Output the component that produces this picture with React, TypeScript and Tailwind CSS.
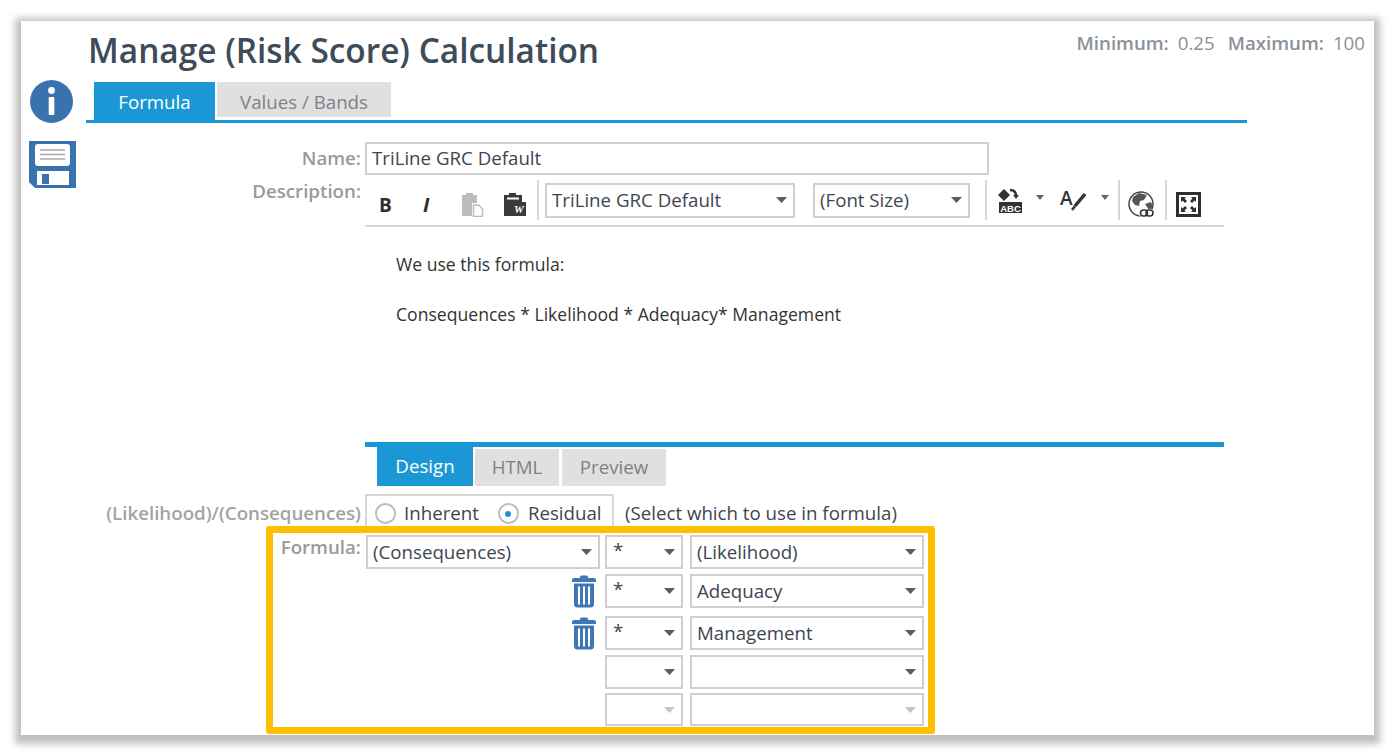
import React from 'react';

const Arrow = ({ muted = false }: { muted?: boolean }) => (
  <svg width="11" height="6" viewBox="0 0 11 6" className="shrink-0">
    <path d="M0 0h11L5.500 6z" fill={muted ? '#c4c4c4' : '#5c5c5c'} />
  </svg>
);

const Select = ({
  value,
  className,
  muted,
  textClass = '',
}: {
  value?: string;
  className: string;
  muted?: boolean;
  textClass?: string;
}) => (
  <div className={`flex shrink-0 items-center justify-between border-2 border-[#cfcfcf] bg-white pl-[5px] pr-[6px] text-[18.7px] text-[#3d4650] ${className}`}>
    <span className={`whitespace-nowrap leading-[24px] ${textClass}`}>{value}</span>
    <Arrow muted={muted} />
  </div>
);

const InfoIcon = () => (
  <svg width="43" height="43" viewBox="0 0 43 43">
    <circle cx="21.5" cy="21.5" r="21.5" fill="#3a72ad" />
    <circle cx="21.5" cy="10.5" r="3.4" fill="#fff" />
    <rect x="18.7" y="17" width="5.6" height="18" rx="1" fill="#fff" />
  </svg>
);

const SaveIcon = () => (
  <svg width="47" height="47" viewBox="0 0 47 47">
    <path d="M0 0h47v47H6l-6-6z" fill="#3a72ad" />
    <rect x="6" y="3" width="35" height="22" rx="3" fill="#fff" />
    <path d="M11 9h25M11 13.500h25M11 18h25" stroke="#a9a9a9" strokeWidth="1.500" />
    <path d="M8 30h32v14H8z" fill="#fff" />
    <rect x="13" y="33" width="7" height="10" fill="#3a72ad" />
  </svg>
);

const TrashIcon = () => (
  <svg width="24" height="33" viewBox="0 0 24 33">
    <path d="M8 3V2a1.500 1.500 0 0 1 1.500-1.500h5A1.500 1.500 0 0 1 16 2v1h6a2 2 0 0 1 2 2v2H0V5a2 2 0 0 1 2-2z" fill="#3f78b5" />
    <path d="M2 8.500h20V29a3.500 3.500 0 0 1-3.500 3.500h-13A3.500 3.500 0 0 1 2 29z" fill="#3f78b5" />
    <path d="M7 11.500v18M12 11.500v18M17 11.500v18" stroke="#fff" strokeWidth="2" />
  </svg>
);

const PasteIcon = () => (
  <svg width="24" height="25" viewBox="0 0 24 25">
    <path d="M1 3h4V1h7v2h4v8h-5v13H1z" fill="#bdbdbd" />
    <path d="M12.500 13h5l4 4v7.500h-9z" fill="#fff" stroke="#bdbdbd" strokeWidth="1.500" />
  </svg>
);

const PasteWordIcon = () => (
  <svg width="24" height="25" viewBox="0 0 24 25">
    <path d="M1 3h5V1h7v2h6v7H9v14H1z" fill="#3a3a3a" />
    <path d="M4 5.500h12v2H4z" fill="#fff" />
    <rect x="9" y="10" width="14" height="14" fill="#3a3a3a" />
    <text x="16" y="21" textAnchor="middle" fontSize="11" fontWeight="700" fontStyle="italic" fill="#fff" fontFamily="Liberation Serif, serif">W</text>
  </svg>
);

const HighlightIcon = () => (
  <svg width="25" height="25" viewBox="0 0 25 25">
    <path d="M1 7l6-6 6 6-6 6z" fill="#333" />
    <path d="M13 2c4 0 6 2 6 6" fill="none" stroke="#333" strokeWidth="2.500" />
    <path d="M16 7h6l-3 4z" fill="#333" />
    <rect x="2" y="14" width="23" height="11" fill="#333" />
    <text x="13.500" y="23.500" textAnchor="middle" fontSize="9.500" fontWeight="700" fill="#fff" fontFamily="Liberation Sans, sans-serif">ABC</text>
  </svg>
);

const TextColorIcon = () => (
  <div className="flex h-[26px] w-[26px] items-start">
    <span className="text-[19px] font-semibold leading-[22px] text-[#333]">A</span>
    <svg width="15" height="24" viewBox="0 0 15 24" className="-ml-[2px]">
      <path d="M14 7L4 19" fill="none" stroke="#333" strokeWidth="3.500" />
      <path d="M4 19l-3 4" fill="none" stroke="#333" strokeWidth="2.500" />
    </svg>
  </div>
);

const GlobeLinkIcon = () => (
  <svg width="27" height="27" viewBox="0 0 27 27">
    <circle cx="13" cy="13" r="12" fill="#fff" stroke="#444" strokeWidth="1.500" />
    <path d="M5 6l6-4 8 2-3 5-4 1-1 5-4-1-3-4zM17 13l6-2 2 5-4 3z" fill="#555" />
    <rect x="11" y="18" width="15" height="8" rx="3.500" fill="#fff" />
    <rect x="12.500" y="19" width="7" height="6" rx="3" fill="none" stroke="#333" strokeWidth="1.600" />
    <rect x="18" y="19" width="7" height="6" rx="3" fill="none" stroke="#333" strokeWidth="1.600" />
  </svg>
);

const FullscreenIcon = () => (
  <svg width="25" height="25" viewBox="0 0 25 25">
    <rect x="1.500" y="1.500" width="22" height="22" fill="#fff" stroke="#2f2f2f" strokeWidth="3" />
    <path d="M5 5h5l-1.500 1.500L11 9l-2 2-2.500-2.500L5 10zM20 5v5l-1.500-1.500L16 11l-2-2 2.500-2.500L15 5zM5 20v-5l1.500 1.500L9 14l2 2-2.500 2.500L10 20zM20 20h-5l1.500-1.500L14 16l2-2 2.500 2.500L20 15z" fill="#2f2f2f" />
  </svg>
);

const SmallArrow = ({ className }: { className: string }) => (
  <svg width="8" height="5" className={`shrink-0 ${className}`} viewBox="0 0 8 5">
    <path d="M0 0h8L4 5z" fill="#666" />
  </svg>
);

const Divider = ({ className }: { className: string }) => <div className={`h-[40px] w-[2px] shrink-0 bg-[#d6d6d6] ${className}`} />;

const Radio = ({ checked }: { checked?: boolean }) => (
  <span className="flex h-[21px] w-[21px] items-center justify-center rounded-full border-2 border-[#bdbdbd] bg-white">
    {checked && <span className="h-[6px] w-[6px] rounded-full bg-[#1b97d5]" />}
  </span>
);

const rows = [
  { op: '*', value: 'Adequacy', h: 'h-[34px]', mb: 'mb-[8px]', trash: true },
  { op: '*', value: 'Management', h: 'h-[34px]', mb: 'mb-[5px]', trash: true },
  { op: '', value: '', h: 'h-[34px]', mb: 'mb-[4px]', trash: false },
  { op: '', value: '', h: 'h-[33px]', mb: '', trash: false, muted: true },
];

const App: React.FC = () => {
  return (
    <div className="h-[755px] w-[1395px] overflow-hidden bg-white pl-[21px] pt-[21px] font-['Open_Sans',sans-serif]">
      <div className="flex h-[714px] w-[1353px] bg-white shadow-[0_3px_7px_6px_#c0c0c0]">
        {/* Side actions */}
        <div className="flex w-[65px] shrink-0 flex-col pl-[8px] pt-[59px]">
          <div className="ml-[1px]"><InfoIcon /></div>
          <div className="mt-[18px]"><SaveIcon /></div>
        </div>

        <div className="flex-1">
          {/* Header */}
          <div className="flex h-[61px] items-start justify-between pr-[9px]">
            <h1 className="pl-[2px] pt-[7px] text-[33.4px] font-semibold leading-[44px] text-[#3e4b58]">Manage (Risk Score) Calculation</h1>
            <div className="flex items-baseline pt-[10px] text-[18.7px] leading-[24px] text-[#8a9199]">
              <span className="font-semibold">Minimum:</span>
              <span className="ml-[9px]">0.25</span>
              <span className="ml-[13px] font-semibold">Maximum:</span>
              <span className="ml-[9px]">100</span>
            </div>
          </div>

          {/* Tabs */}
          <div className="flex h-[41px] w-[1161px] items-start gap-[2px] border-b-[3px] border-[#1b97d5] pl-[8px]">
            <div className="flex h-[38px] w-[121px] items-center justify-center bg-[#1b97d5] pt-[2px] text-[18.7px] text-white">Formula</div>
            <div className="flex h-[35px] w-[174px] items-center justify-center bg-[#e0e0e0] pt-[5px] text-[18.7px] text-[#7d8288]">Values / Bands</div>
          </div>

          {/* Name */}
          <div className="mt-[19px] flex items-center">
            <label className="w-[275px] text-right text-[18.7px] font-semibold text-[#9a9a9a]">Name:</label>
            <div className="ml-[4px] flex h-[33px] w-[624px] items-center border-2 border-[#cfcfcf] pl-[5px] text-[18.7px] text-[#3d4650]">TriLine GRC Default</div>
          </div>

          {/* Description editor */}
          <div className="flex">
            <label className="w-[275px] pt-[4px] text-right text-[18.7px] font-semibold leading-[24px] text-[#9a9a9a]">Description:</label>
            <div className="ml-[4px] w-[859px]">
              <div className="flex h-[52px] items-center border-b-2 border-[#d6d6d6]">
                <span className="ml-[14px] mt-[10px] w-[14px] shrink-0 text-[19px] font-bold leading-[22px] text-[#2f2f2f]">B</span>
                <span className="ml-[30px] mt-[10px] w-[10px] shrink-0 text-[20px] font-bold italic leading-[22px] text-[#2f2f2f]">I</span>
                <div className="ml-[28px] mt-[8px]"><PasteIcon /></div>
                <div className="ml-[18px] mt-[8px]"><PasteWordIcon /></div>
                <Divider className="ml-[10px]" />
                <Select value="TriLine GRC Default" className="ml-[6px] h-[35px] w-[250px]" />
                <Select value="(Font Size)" className="ml-[18px] h-[35px] w-[157px]" />
                <Divider className="ml-[15px]" />
                <div className="ml-[10px]"><HighlightIcon /></div>
                <SmallArrow className="ml-[14px] mb-[5px]" />
                <div className="ml-[16px]"><TextColorIcon /></div>
                <SmallArrow className="ml-[15px] mb-[5px]" />
                <Divider className="ml-[9px]" />
                <div className="ml-[8px] mt-[8px]"><GlobeLinkIcon /></div>
                <Divider className="ml-[10px]" />
                <div className="ml-[9px] mt-[8px]"><FullscreenIcon /></div>
              </div>
              <div className="h-[220px] border-b-[5px] border-[#1b97d5] pl-[31px] pt-[25px] text-[17.6px] leading-[25px] text-[#333]">
                <p>We use this formula:</p>
                <p className="mt-[25px]">Consequences * Likelihood * Adequacy* Management</p>
              </div>
              <div className="flex items-start pl-[12px]">
                <div className="flex h-[39px] w-[96px] items-center justify-center bg-[#1b97d5] text-[18.7px] text-white">Design</div>
                <div className="ml-[2px] mt-[2px] flex h-[37px] w-[84px] items-center justify-center bg-[#e0e0e0] text-[18.7px] text-[#7d8288]">HTML</div>
                <div className="ml-[3px] mt-[2px] flex h-[37px] w-[104px] items-center justify-center bg-[#e0e0e0] text-[18.7px] text-[#7d8288]">Preview</div>
              </div>
            </div>
          </div>

          {/* Likelihood / consequences choice */}
          <div className="mt-[8px] flex h-[32px] items-center">
            <label className="w-[275px] whitespace-nowrap pt-[6px] text-right text-[18.7px] font-semibold text-[#a3a3a3]">(Likelihood)/(Consequences)</label>
            <div className="ml-[4px] flex h-[32px] w-[249px] items-center whitespace-nowrap border-2 border-b-0 border-[#d6d6d6] pl-[8px] pt-[5px] text-[18.7px] text-[#3d4650]">
              <Radio />
              <span className="ml-[8px]">Inherent</span>
              <span className="ml-[19px]"><Radio checked /></span>
              <span className="ml-[9px]">Residual</span>
            </div>
            <span className="ml-[11px] whitespace-nowrap pt-[7px] text-[18.7px] text-[#3d4650]">(Select which to use in formula)</span>
          </div>

          {/* Formula builder */}
          <div className="ml-[180px] h-[208px] w-[669px] rounded-[3px] border-[7px] border-[#fdbf00] bg-white">
            <div className="flex pt-[2px]">
              <label className="w-[88px] pt-[1px] text-right text-[18.7px] font-semibold leading-[22px] text-[#9a9a9a]">Formula:</label>
              <div className="ml-[5px]">
                <div className="mb-[5px] flex gap-[5px]">
                  <Select value="(Consequences)" className="h-[34px] w-[234px]" />
                  <Select value="*" className="h-[34px] w-[78px] !pl-[6px]" textClass="pb-[4px]" />
                  <Select value="(Likelihood)" className="ml-[2px] h-[34px] w-[234px]" />
                </div>
                {rows.map((row, i) => (
                  <div key={i} className={`flex gap-[5px] ${row.mb}`}>
                    <div className={`flex w-[234px] items-center justify-end pr-[4px] ${row.h}`}>
                      {row.trash && <TrashIcon />}
                    </div>
                    <Select value={row.op} muted={row.muted} className={`w-[78px] !pl-[6px] ${row.h}`} textClass="pb-[4px]" />
                    <Select value={row.value} muted={row.muted} className={`ml-[2px] w-[234px] ${row.h}`} />
                  </div>
                ))}
              </div>
            </div>
          </div>
        </div>
      </div>
    </div>
  );
};

export default App;
